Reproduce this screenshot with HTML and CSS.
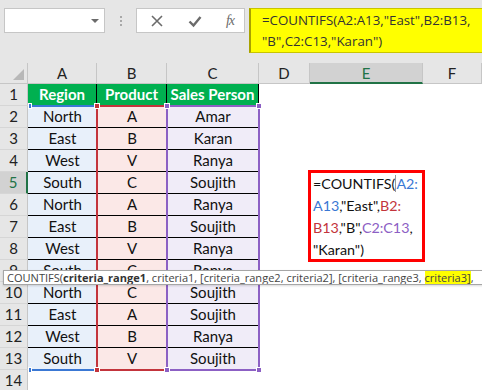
FILE: index.html
```html
<!DOCTYPE html>
<html>
<head>
<meta charset="utf-8">
<link rel="stylesheet" href="styles.css">
</head>
<body>
<div class="app">
  <div class="toolbar">
    <div class="namebox"><span class="caret"></span></div>
    <div class="grip"><i></i><i></i><i></i></div>
    <div class="fxbox">
      <svg class="ico" width="14" height="14" viewBox="0 0 14 14"><path d="M2 2 L12 12 M12 2 L2 12" stroke="#6b6b6b" stroke-width="1.6" fill="none"/></svg>
      <svg class="ico" width="14" height="14" viewBox="0 0 14 14"><path d="M1.5 7.5 L5.5 11.5 L12.5 3" stroke="#6b6b6b" stroke-width="2.4" fill="none"/></svg>
      <span class="fx">fx</span>
    </div>
    <div class="formula">=COUNTIFS(A2:A13,"East",B2:B13,<br>"B",C2:C13,"Karan")</div>
  </div>
  <div class="sheet">
    <div class="corner"></div><div class="ch">A</div><div class="ch">B</div><div class="ch">C</div><div class="ch">D</div><div class="ch sel">E</div><div class="ch">F</div>

    <div class="rh">1</div><div class="c hd">Region</div><div class="c hd">Product</div><div class="c hd">Sales Person</div><div class="c"></div><div class="c"></div><div class="c"></div>
    <div class="rh">2</div><div class="c a ln">North</div><div class="c b ln">A</div><div class="c p ln">Amar</div><div class="c"></div><div class="c"></div><div class="c"></div>
    <div class="rh">3</div><div class="c a ln">East</div><div class="c b ln">B</div><div class="c p ln">Karan</div><div class="c"></div><div class="c"></div><div class="c"></div>
    <div class="rh">4</div><div class="c a ln">West</div><div class="c b ln">V</div><div class="c p ln">Ranya</div><div class="c"></div><div class="c"></div><div class="c"></div>
    <div class="rh rsel">5</div><div class="c a ln">South</div><div class="c b ln">C</div><div class="c p ln">Soujith</div><div class="c"></div><div class="c"></div><div class="c"></div>
    <div class="rh">6</div><div class="c a ln">North</div><div class="c b ln">A</div><div class="c p ln">Ranya</div><div class="c"></div><div class="c"></div><div class="c"></div>
    <div class="rh">7</div><div class="c a ln">East</div><div class="c b ln">B</div><div class="c p ln">Soujith</div><div class="c"></div><div class="c"></div><div class="c"></div>
    <div class="rh">8</div><div class="c a ln">West</div><div class="c b ln">V</div><div class="c p ln">Ranya</div><div class="c"></div><div class="c"></div><div class="c"></div>
    <div class="rh">9</div><div class="c a ln">South</div><div class="c b ln">C</div><div class="c p ln">Ranya</div><div class="c"></div><div class="c"></div><div class="c"></div>
    <div class="rh">10</div><div class="c a ln">North</div><div class="c b ln">C</div><div class="c p ln">Soujith</div><div class="c"></div><div class="c"></div><div class="c"></div>
    <div class="rh">11</div><div class="c a ln">East</div><div class="c b ln">A</div><div class="c p ln">Soujith</div><div class="c"></div><div class="c"></div><div class="c"></div>
    <div class="rh">12</div><div class="c a ln">West</div><div class="c b ln">B</div><div class="c p ln">Ranya</div><div class="c"></div><div class="c"></div><div class="c"></div>
    <div class="rh">13</div><div class="c a">South</div><div class="c b">V</div><div class="c p">Soujith</div><div class="c"></div><div class="c"></div><div class="c"></div>
    <div class="rh">14</div><div class="c"></div><div class="c"></div><div class="c"></div><div class="c"></div><div class="c"></div><div class="c"></div>

    <div class="range ra"><span class="h htl"></span><span class="h hbl"></span></div>
    <div class="range rb"><span class="h htl"></span><span class="h hbl"></span></div>
    <div class="range rc"><span class="h htl"></span><span class="h htr"></span><span class="h hbl"></span><span class="h hbr"></span></div>

    <div class="edit">=COUNTIFS(<span class="cur"></span><span class="kb">A2:</span><br><span class="kb">A13</span>,"East",<span class="kr">B2:</span><br><span class="kr">B13</span>,"B",<span class="kp">C2:C13</span>,<br>"Karan")</div>

    <div class="tip">COUNTIFS(<b>criteria_range1</b>, criteria1, [criteria_range2, criteria2], [criteria_range3, <span class="hl">criteria3]</span>,</div>
  </div>
</div>
</body>
</html>
```
FILE: styles.css
```css
* { box-sizing: border-box; }
html, body { margin: 0; padding: 0; }
body { width: 482px; height: 390px; overflow: hidden; background: #fff; font-family: Lato, "Liberation Sans", sans-serif; }
.app { width: 482px; }

.toolbar { height: 63px; background: #e6e6e6; display: flex; align-items: flex-start; padding: 8px 0 0 4px; }
.namebox { width: 101px; height: 25px; background: #fff; border: 1px solid #c6c6c6; position: relative; }
.caret { position: absolute; right: 5px; top: 10px; width: 0; height: 0; border-left: 4px solid transparent; border-right: 4px solid transparent; border-top: 4px solid #6b6b6b; }
.grip { width: 31px; height: 25px; display: flex; flex-direction: column; align-items: center; justify-content: center; gap: 2px; }
.grip i { width: 2px; height: 2px; background: #a8a8a8; display: block; }
.fxbox { width: 109px; height: 25px; background: #fff; border: 1px solid #c6c6c6; display: flex; align-items: center; justify-content: space-between; padding: 0 10px 0 13px; }
.fx { font-family: "Liberation Serif", serif; font-style: italic; font-size: 14px; color: #6b6b6b; letter-spacing: -1px; }
.formula { margin-left: 4px; flex: 1; height: 45px; background: #ffff00; border: 1px solid #c8c400; border-left: 2px solid #a8a200; border-right: none; font-family: "Open Sans", sans-serif; font-size: 13.3px; line-height: 21px; color: #333; padding: 1px 0 0 11px; white-space: nowrap; }

.sheet { position: relative; display: grid; grid-template-columns: 28px 69px 70px 92px 51px 113px 59px; grid-template-rows: 21px repeat(14, 22px); }
.corner { background: #e6e6e6; border-right: 1px solid #c6c6c6; border-bottom: 1px solid #c6c6c6; position: relative; }
.corner::after { content: ""; position: absolute; right: 3px; bottom: 3px; width: 0; height: 0; border-left: 11px solid transparent; border-bottom: 11px solid #b8b8b8; }
.ch { background: #e6e6e6; border-right: 1px solid #c6c6c6; border-bottom: 1px solid #c6c6c6; text-align: center; font-size: 15px; line-height: 20px; color: #222; }
.ch.sel { background: #d2d2d2; color: #217346; border-bottom: 2px solid #217346; }
.rh { background: #e6e6e6; border-right: 1px solid #c6c6c6; border-bottom: 1px solid #d6d6d6; text-align: center; font-size: 15px; line-height: 21px; color: #222; }
.rh.rsel { background: #d2d2d2; color: #217346; border-right: 2px solid #217346; }
.c { font-size: 15px; line-height: 21px; text-align: center; color: #111; white-space: nowrap; overflow: hidden; }
.hd { background: #00b050; color: #fff; font-weight: bold; border-right: 1px solid #000; }
.a { background: #e8f0fa; }
.b { background: #fbe8e7; }
.p { background: #f0ecf8; }
.ln { border-bottom: 1px solid #000; }

.range { position: absolute; top: 42px; height: 266px; border: 2px solid; }
.ra { left: 28px; width: 70px; border-color: #3a78d4; border-left-color: transparent; }
.rb { left: 96px; width: 72px; border-color: #c3343c; }
.rc { left: 166px; width: 94px; border-color: #8c60c4; }
.h { position: absolute; width: 6px; height: 6px; border: 1px solid #fff; }
.ra .h { background: #3a78d4; }
.rb .h { background: #c3343c; }
.rc .h { background: #8c60c4; }
.htl { left: -4px; top: -4px; }
.htr { right: -4px; top: -4px; }
.hbl { left: -4px; bottom: -4px; }
.hbr { right: -4px; bottom: -4px; }
.ra .htl, .ra .hbl { left: -2px; width: 4px; }

.edit { position: absolute; left: 308px; top: 107px; width: 117px; height: 92px; border: 3px solid #ff0000; background: #fff; font-size: 14.3px; line-height: 22px; color: #111; padding: 0 0 0 2px; white-space: nowrap; }
.cur { display: inline-block; width: 1px; height: 17px; background: #999; vertical-align: -3px; }
.kb { color: #3a78d4; }
.kr { color: #c3343c; }
.kp { color: #8c60c4; }

.tip { position: absolute; left: 3px; top: 207px; width: 490px; height: 15px; background: #fff; border: 1px solid #a6a6a6; font-family: "Open Sans", sans-serif; font-size: 11.05px; line-height: 13px; color: #444; padding-left: 3px; white-space: nowrap; box-shadow: 0 1px 2px rgba(0,0,0,0.15); overflow: hidden; }
.tip b { color: #333; }
.hl { background: #ffff00; }
```
